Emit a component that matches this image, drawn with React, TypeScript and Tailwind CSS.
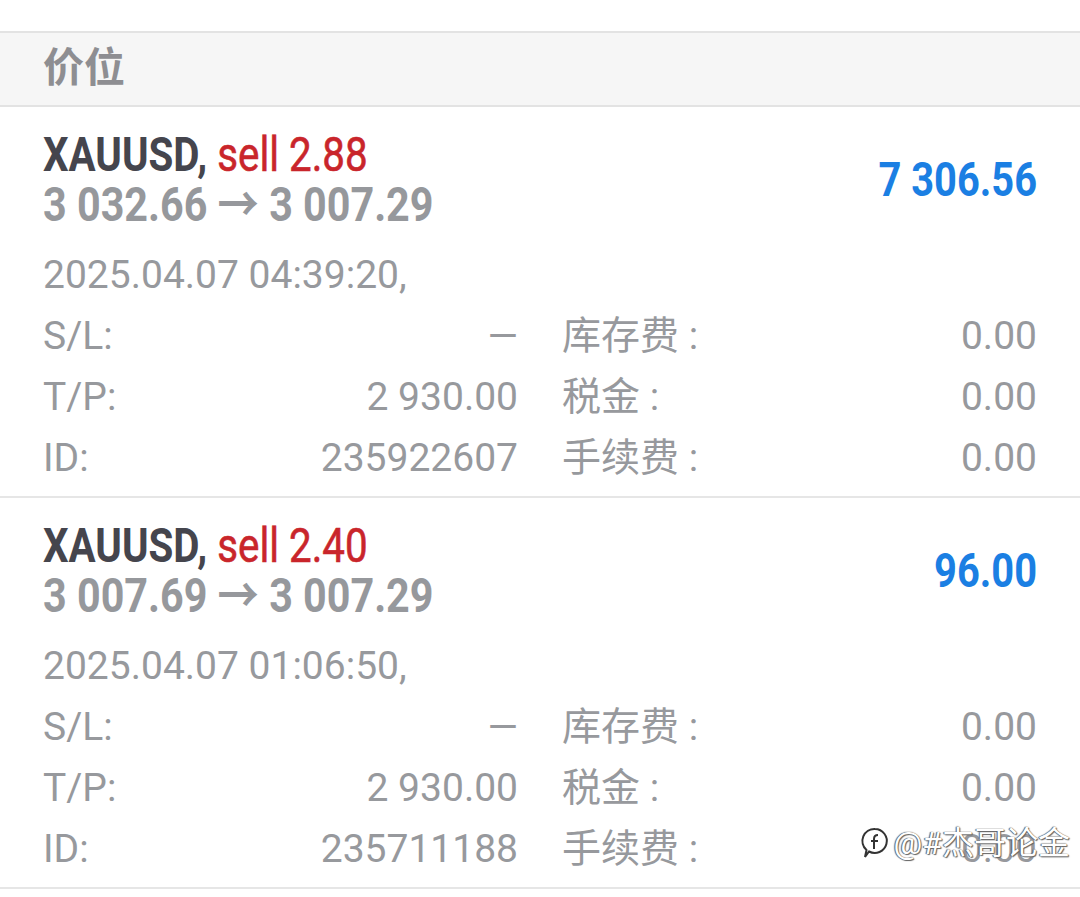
import React from "react";

type Position = {
  volume: string;
  from: string;
  to: string;
  profit: string;
  time: string;
  tp: string;
  id: string;
};

const POSITIONS: Position[] = [
  { volume: "2.88", from: "3 032.66", to: "3 007.29", profit: "7 306.56", time: "2025.04.07 04:39:20,", tp: "2 930.00", id: "235922607" },
  { volume: "2.40", from: "3 007.69", to: "3 007.29", profit: "96.00", time: "2025.04.07 01:06:50,", tp: "2 930.00", id: "235711188" },
];

const font = "font-['Roboto','Noto_Sans_CJK_SC',sans-serif]";

function Row({ label, value }: { label: string; value: string }) {
  return (
    <div className="flex h-[61px] items-center justify-between text-[39px] text-[#97999d]">
      <span>{label}</span>
      <span>{value}</span>
    </div>
  );
}

function PositionItem({ p }: { p: Position }) {
  return (
    <div className="border-b-2 border-[#e6e6e6] px-[43px] pt-[23px] pb-[7px]">
      <div className="flex items-center justify-between">
        <div className="min-w-0 flex-1">
          <div className="h-[50px] origin-left scale-x-[0.84] whitespace-nowrap text-[48px] leading-[50px] font-bold">
            <span className="text-[#45454d]">XAUUSD, </span>
            <span className="font-normal text-[#c9252b] [-webkit-text-stroke:0.6px_#c9252b]">sell {p.volume}</span>
          </div>
          <div className="h-[50px] origin-left scale-x-[0.86] whitespace-nowrap text-[48px] leading-[50px] font-bold text-[#96989c]">
            {p.from} → {p.to}
          </div>
        </div>
        <div className="origin-right scale-x-[0.83] text-[48px] font-bold text-[#1b7fe3]">{p.profit}</div>
      </div>
      <div className="mt-[15px] flex h-[61px] items-center text-[39px] text-[#97999d]">{p.time}</div>
      <div className="grid grid-cols-2 gap-x-[44px]">
        <div>
          <Row label="S/L:" value="—" />
          <Row label="T/P:" value={p.tp} />
          <Row label="ID:" value={p.id} />
        </div>
        <div>
          <Row label="库存费 :" value="0.00" />
          <Row label="税金 :" value="0.00" />
          <Row label="手续费 :" value="0.00" />
        </div>
      </div>
    </div>
  );
}

export default function App() {
  return (
    <div className={`relative h-[897px] w-[1080px] overflow-hidden bg-white ${font}`}>
      <div className="h-[31px]" />
      <div className="flex h-[76px] items-center border-y-2 border-[#e3e3e3] bg-[#f6f6f6] px-[43px] text-[41px] font-bold text-[#8e8e92]">
        价位
      </div>
      {POSITIONS.map((p) => (
        <PositionItem key={p.id} p={p} />
      ))}
      <div className="absolute right-[10px] bottom-[30px] flex items-center gap-[4px] text-[32px] text-white [text-shadow:0_0_1px_#444,1px_1px_1px_#666,-1px_0_1px_#666]">
        <svg width="30" height="34" viewBox="0 0 30 34" fill="none" strokeWidth="2">
          <path d="M15 3a12 12 0 1 1-6 22.5L5 31l1.5-7A12 12 0 0 1 15 3z" stroke="#fff" strokeWidth="3.5" />
          <path d="M15 3a12 12 0 1 1-6 22.5L5 31l1.5-7A12 12 0 0 1 15 3z" stroke="#333" />
          <path d="M18 9c-3 0-4 2-4 4v10M11 15h7" stroke="#333" />
        </svg>
        <span>@#杰哥论金</span>
      </div>
    </div>
  );
}
